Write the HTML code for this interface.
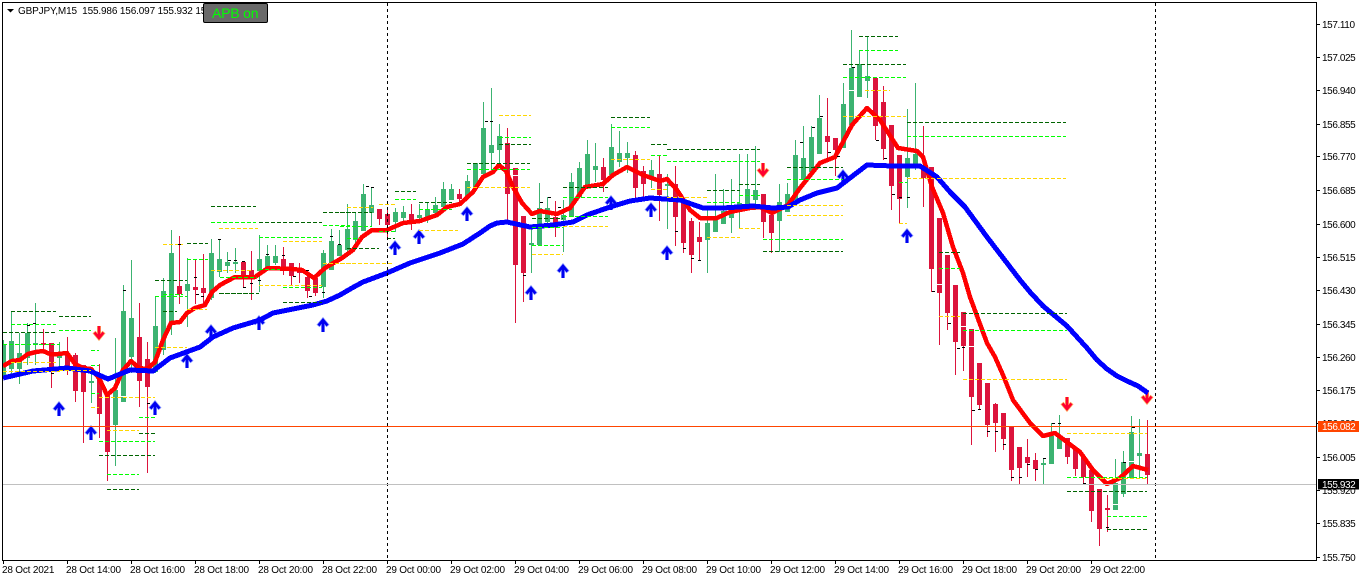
<!DOCTYPE html>
<html><head><meta charset="utf-8"><title>GBPJPY,M15</title>
<style>
html,body{margin:0;padding:0;background:#fff;width:1362px;height:581px;overflow:hidden}
svg{display:block}
text{font-family:"Liberation Sans",sans-serif;font-size:10px;fill:#000}
</style></head><body>
<svg width="1362" height="581" viewBox="0 0 1362 581" xmlns="http://www.w3.org/2000/svg">
<defs>
<clipPath id="c"><rect x="3" y="3" width="1313" height="557"/></clipPath>
<g id="u"><path d="M0 7V-5M-5 1L0 -5L5 1" fill="none" stroke="#8f9fff" stroke-width="4"/><path d="M0 7V-5M-4.500 .5L0 -5L4.500 .5" fill="none" stroke="#0000f0" stroke-width="2.600"/></g>
<g id="d"><path d="M0 -7V5M-5 -1L0 5L5 -1" fill="none" stroke="#ffb060" stroke-width="4"/><path d="M0 -7V5M-4.500 -.5L0 5L4.500 -.5" fill="none" stroke="#ff0030" stroke-width="2.600"/></g>
</defs>
<g clip-path="url(#c)">
<g transform="translate(.5,0)" shape-rendering="crispEdges" fill="none">
<path stroke="#3cb371" stroke-width="1" d="M3 340V378M11 311V375M19 333V384M27 323V365M35 303V365M59 342V370M91 373V403M115 338V466M123 285V402M131 260V373M155 297V373M163 278V355M171 230V335M187 258V327M211 239V300M219 239V277M227 252V273M235 248V273M259 235V292M267 245V268M275 245V265M323 250V298M331 229V270M339 230V256M347 204V257M355 212V250M363 184V231M371 187V227M395 208V232M403 206V225M419 204V223M427 203V223M435 197V218M443 182V207M451 184V200M467 175V198M475 163V188M483 102V175M491 88V170M499 124V168M531 227V273M539 183V245M547 197V227M563 200V252M571 173V217M579 162V197M587 140V185M595 143V182M611 124V175M619 131V167M627 142V173M651 160V188M667 174V229M707 210V273M715 174V232M723 189V224M731 179V233M739 154V228M747 154V208M755 146V210M779 184V252M787 183V212M795 140V200M803 126V180M811 126V172M819 95V154M843 83V148M851 30V125M859 50V97M867 36V98M907 109V208M915 83V170M1043 458V484M1051 423V464M1059 415V449M1115 459V510M1123 451V497M1131 416V478M1139 419V477"/>
<path stroke="#dc143c" stroke-width="1" d="M43 329V353M51 343V388M67 337V375M75 353V402M83 365V443M99 364V438M107 393V481M139 303V407M147 342V473M179 236V304M195 259V304M203 254V305M243 262V287M251 251V300M283 247V275M291 263V285M299 263V283M307 270V298M315 277V296M379 209V225M387 210V237M411 204V230M459 189V203M507 128V220M515 168V323M523 216V302M555 201V237M603 158V192M635 151V198M643 166V200M659 156V221M675 166V246M683 203V253M691 218V273M699 222V261M763 194V238M771 215V253M827 98V162M835 138V176M875 78V140M883 86V160M891 125V210M899 155V223M923 126V207M931 167V292M939 218V345M947 255V330M955 285V375M963 312V371M971 329V445M979 363V409M987 383V437M995 403V452M1003 413V450M1011 426V481M1019 447V485M1027 439V477M1035 453V481M1067 438V464M1075 448V476M1083 457V484M1091 470V522M1099 489V546M1107 495V532M1147 420V485"/>
<path stroke="#3cb371" stroke-width="5" d="M3 344V377M11 341V369M19 353V369M27 333V358M35 343V345M59 353V358M91 381V383M115 390V425M123 311V402M131 318V357M155 326V372M163 291V350M171 253V322M187 284V291M211 253V298M219 259V272M227 262V266M235 262V264M259 259V271M267 256V268M275 256V263M323 253V287M331 241V270M339 245V256M347 229V250M355 221V240M363 194V231M371 205V213M395 212V222M403 212V218M419 215V218M427 209V217M435 205V213M443 189V207M451 189V200M467 181V198M475 163V188M483 128V174M491 145V153M499 136V150M531 243V245M539 208V245M547 208V222M563 215V220M571 182V217M579 168V197M587 154V185M595 166V170M611 147V175M619 153V162M627 153V158M651 170V177M667 184V186M707 223V240M715 220V232M723 211V224M731 208V218M739 203V212M747 189V208M755 190V200M779 202V221M787 194V212M795 155V200M803 158V180M811 137V172M819 118V154M843 104V148M851 68V125M859 64V97M867 76V81M907 158V177M915 154V164M1043 463V465M1051 436V464M1059 436V449M1115 483V510M1123 462V494M1131 432V478M1139 453V456"/>
<path stroke="#dc143c" stroke-width="5" d="M43 343V345M51 343V368M67 353V370M75 355V391M83 365V392M99 375V414M107 395V452M139 337V381M147 359V387M179 286V294M195 287V290M203 288V293M243 262V277M251 270V277M283 259V268M291 263V276M299 268V273M307 277V291M315 278V293M379 209V219M387 214V225M411 214V224M459 194V199M507 143V194M515 168V265M523 216V273M555 217V225M603 167V180M635 155V188M643 171V184M659 174V195M675 184V217M683 203V243M691 221V255M699 237V242M763 194V222M771 215V233M827 136V142M835 138V150M875 78V126M883 102V149M891 125V186M899 155V199M923 167V178M931 167V269M939 218V293M947 255V313M955 285V342M963 312V346M971 329V397M979 363V405M987 383V425M995 404V423M1003 413V439M1011 426V470M1019 447V468M1027 457V463M1035 460V469M1067 438V457M1075 448V469M1083 457V477M1091 470V511M1099 489V529M1107 508V510M1147 454V475"/>
</g>
<path fill="none" stroke="#fff" stroke-width="1" shape-rendering="crispEdges" d="M849 90.500h6M937 284.500h6M969 346.500h6M513 175.500h6M1129 461.500h6M1113 504.500h6M961 326.500h5M121 396.500h5"/>
<use href="#u" x="59" y="409"/><use href="#u" x="91" y="433"/><use href="#u" x="155" y="408"/><use href="#u" x="187" y="361"/><use href="#u" x="211" y="332"/><use href="#u" x="259" y="323"/><use href="#u" x="323" y="325"/><use href="#u" x="395" y="248"/><use href="#u" x="419" y="237"/><use href="#u" x="467" y="214"/><use href="#u" x="531" y="293"/><use href="#u" x="563" y="271"/><use href="#u" x="611" y="203"/><use href="#u" x="651" y="210"/><use href="#u" x="667" y="253"/><use href="#u" x="843" y="177"/><use href="#u" x="907" y="236"/>
<use href="#d" x="99" y="333"/><use href="#d" x="763" y="170"/><use href="#d" x="1067" y="404"/><use href="#d" x="1147" y="397"/>
<path fill="none" stroke="#ff0000" stroke-width="4.500" stroke-linejoin="round" shape-rendering="crispEdges" d="M3 366L12 361L20 360L28 354L36 352L43 351L50 354L58 354L67 353L75 364L83 368L91 369L99 378L107 395L115 388L123 370L131 361L139 368L147 369L155 362L163 340L171 323L180 322L187 313L195 308L205 305L212 292L220 285L235 277L255 277L268 268L292 269L302 270L314 278L325 268L342 258L353 250L362 237L372 230L387 230L403 223L420 221L437 215L447 207L460 204L473 192L483 177L493 172L499 165L506 171L513 187L522 203L532 214L540 211L557 214L570 208L585 187L603 184L613 175L627 167L643 175L660 181L667 179L677 190L690 210L700 218L717 218L730 212L750 208L760 207L772 213L788 205L800 188L820 163L835 157L852 125L867 108L880 120L898 148L917 151L923 157L932 187L943 213L953 247L963 273L970 297L987 343L995 357L1003 375L1013 400L1030 423L1043 436L1055 433L1080 452L1093 470L1107 484L1120 478L1133 466L1148 470"/>
<path fill="none" stroke="#0000ff" stroke-width="5" stroke-linejoin="round" shape-rendering="crispEdges" d="M3 378L33 371L67 368L90 371L108 379L130 370L153 371L170 358L200 347L213 337L233 328L260 320L273 313L313 305L327 301L340 295L352 288L363 282L387 273L410 263L440 253L463 244L480 233L490 226L497 223L507 222L530 227L553 225L573 222L587 215L610 207L630 201L650 198L680 200L703 208L723 208L753 206L773 208L788 207L800 200L817 193L837 188L850 178L867 165L893 166L920 166L937 177L950 192L965 207L987 237L1020 280L1030 292L1043 306L1055 316L1067 326L1077 337L1087 348L1097 360L1107 369L1117 376L1127 381L1138 386L1148 393"/>
<g transform="translate(0,.5)" fill="none" stroke-width="1" shape-rendering="crispEdges" stroke-dasharray="4 2">
<path stroke="#006400" d="M11 311H56M59 316H91M3 332H56M163 311H177M220 293H259M283 302H320M139 433H155M99 455H155M107 489H139M155 280H187M187 243H208M211 206H256M219 293H255M259 222H322M283 302H322M323 212H355M340 212H372M347 248H379M395 191H416M419 202H452M387 238H395M499 144H531M467 163H530M611 117H650M651 144H667M667 149H760M563 187H608M532 218H563M707 190H740M739 184H760M763 251H843M787 167H843M859 36H898M843 64H906M907 122H1066M939 252H960M963 313H1067M1067 491H1147M1107 529H1147"/>
<path stroke="#00ff00" d="M11 324H56M59 330H91M3 344H60M91 350H99M91 365H99M91 393H99M139 417H155M99 441H155M107 474H139M155 296H187M163 294H183M187 259H208M211 222H256M220 277H257M259 237H322M259 269H280M283 287H322M323 225H350M340 226H372M347 238H360M395 199H416M419 209H452M379 231H395M499 137H531M467 169H530M611 127H650M651 155H667M667 161H760M563 197H608M563 216H608M532 245H563M532 227H563M707 202H740M739 195H760M763 239H843M787 179H843M859 50H898M843 77H906M907 136H1066M899 182H907M939 268H960M963 330H1067M1067 477H1147M1107 516H1147"/>
<path stroke="#ffd700" d="M11 362H56M3 371H60M59 370H91M99 397H155M91 407H99M107 430H139M155 347H187M187 309H207M163 244H183M211 270H252M219 228H258M259 285H322M283 241H322M347 207H373M323 263H355M340 263H392M379 204H395M419 230H458M499 115H531M467 187H530M611 159H650M651 189H667M563 226H608M532 254H563M667 197H707M707 237H740M739 228H760M787 205H843M787 215H843M843 116H906M865 90H890M907 178H1066M899 223H907M939 316H960M963 379H1067M1067 433H1147M1100 478H1147"/>
<path stroke="#000" stroke-dasharray="none" d="M178 244h3M218 239h3M228 260h3M234 260h3M242 261h3M194 277h3M196 294h3M201 296h3M243 287h3M250 283h3M258 280h3M266 254h3M282 255h3M293 276h3M306 270h3M309 296h3M322 292h3M330 236h3M338 244h3M366 186h3M371 187h3M485 121h3M490 121h3M523 275h3M540 202h3M548 197h3M558 207h3M675 231h3M683 248h3M691 258h3M698 260h3M800 142h3M812 127h3M820 116h3M828 152h3M837 156h3M852 67h3M876 140h3M884 158h3M892 194h3M899 197h3M907 197h3M932 291h3M948 323h3M957 348h3M962 347h3M972 410h3M978 409h3M987 431h3M995 431h3M1003 444h3M1011 477h3M1019 477h3M1027 464h3M1035 469h3M1043 458h3M1052 423h3M1058 423h3M1083 483h3M1106 527h3M1123 462h3M1132 427h3M1148 484h3M27 325h3M33 323h3M51 373h3M123 290h3M147 403h3"/>
</g>
<path fill="none" stroke="#000" stroke-width="1" stroke-dasharray="3 3" shape-rendering="crispEdges" d="M387.500 3V560M1155.500 3V558"/>
</g>
<rect x="3" y="426" width="1313" height="1" fill="#ff4500"/>
<rect x="3" y="484" width="1313" height="1" fill="#c0c0c0"/>
<path fill="none" stroke="#000" stroke-width="1" shape-rendering="crispEdges" d="M2.500 2.500H1316.500V560.500H2.500Z"/>
<path fill="none" stroke="#000" stroke-width="1" shape-rendering="crispEdges" d="M1317 24.500h3M1317 57.500h3M1317 90.500h3M1317 124.500h3M1317 156.500h3M1317 190.500h3M1317 224.500h3M1317 257.500h3M1317 290.500h3M1317 324.500h3M1317 357.500h3M1317 390.500h3M1317 423.500h3M1317 457.500h3M1317 490.500h3M1317 523.500h3M1317 557.500h3M3.500 561v3M67.500 561v3M131.500 561v3M195.500 561v3M259.500 561v3M323.500 561v3M387.500 561v3M451.500 561v3M515.500 561v3M579.500 561v3M643.500 561v3M707.500 561v3M771.500 561v3M835.500 561v3M899.500 561v3M963.500 561v3M1027.500 561v3M1091.500 561v3"/>
<g style="letter-spacing:-.4px">
<text x="1322" y="28">157.110</text><text x="1322" y="61">157.025</text><text x="1322" y="94">156.940</text><text x="1322" y="128">156.855</text><text x="1322" y="160">156.770</text><text x="1322" y="194">156.685</text><text x="1322" y="228">156.600</text><text x="1322" y="261">156.515</text><text x="1322" y="294">156.430</text><text x="1322" y="328">156.345</text><text x="1322" y="361">156.260</text><text x="1322" y="394">156.175</text><text x="1322" y="427">156.090</text><text x="1322" y="461">156.005</text><text x="1322" y="494">155.920</text><text x="1322" y="527">155.835</text><text x="1322" y="561">155.750</text>
</g>
<rect x="1318" y="421" width="41" height="11" fill="#ff4500"/>
<text x="1322" y="430" style="letter-spacing:-.4px;fill:#fff">156.082</text>
<rect x="1318" y="479" width="41" height="10.500" fill="#000"/>
<text x="1322" y="488" style="letter-spacing:-.4px;fill:#fff">155.932</text>
<g style="letter-spacing:-.2px">
<text x="2" y="573">28 Oct 2021</text><text x="66" y="573">28 Oct 14:00</text><text x="130" y="573">28 Oct 16:00</text><text x="194" y="573">28 Oct 18:00</text><text x="258" y="573">28 Oct 20:00</text><text x="322" y="573">28 Oct 22:00</text><text x="386" y="573">29 Oct 00:00</text><text x="450" y="573">29 Oct 02:00</text><text x="514" y="573">29 Oct 04:00</text><text x="578" y="573">29 Oct 06:00</text><text x="642" y="573">29 Oct 08:00</text><text x="706" y="573">29 Oct 10:00</text><text x="770" y="573">29 Oct 12:00</text><text x="834" y="573">29 Oct 14:00</text><text x="898" y="573">29 Oct 16:00</text><text x="962" y="573">29 Oct 18:00</text><text x="1026" y="573">29 Oct 20:00</text><text x="1090" y="573">29 Oct 22:00</text>
</g>
<path d="M7 9h7l-3.500 3.500z" fill="#000"/>
<text x="18" y="14" xml:space="preserve" style="letter-spacing:-.15px">GBPJPY,M15  155.986 156.097 155.932 155</text>
<rect x="203.500" y="3.500" width="64" height="19" rx="1.500" fill="#696969" stroke="#000" stroke-width="1"/>
<text x="212" y="18" style="font-size:14px;letter-spacing:-.2px;fill:#00ff00">APB on</text>
</svg>
</body></html>
